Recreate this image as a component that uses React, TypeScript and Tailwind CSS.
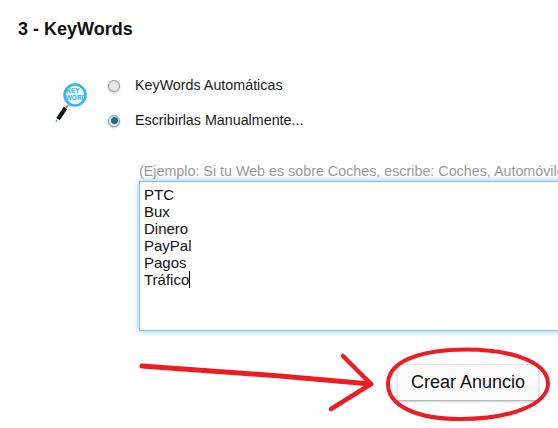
import React from "react";

const KeywordIcon = () => (
  <svg width="36" height="44" viewBox="0 0 36 44">
    <circle cx="21" cy="15" r="10.5" fill="#eaf8fe" stroke="#35b5e8" strokeWidth="2.5" />
    <text x="19" y="13" fontSize="6.5" fontWeight="700" fill="#35b5e8" textAnchor="middle" fontFamily="Liberation Sans">KEY</text>
    <text x="22" y="20" fontSize="6.5" fontWeight="700" fill="#35b5e8" textAnchor="middle" fontFamily="Liberation Sans">WORD</text>
    <line x1="14" y1="25" x2="12" y2="28" stroke="#8a8a8a" strokeWidth="2" />
    <line x1="11.5" y1="28" x2="4" y2="39" stroke="#111" strokeWidth="4" />
    <circle cx="2.5" cy="41" r="1" fill="#35b5e8" />
  </svg>
);

const Radio = ({ checked, label }: { checked?: boolean; label: string }) => (
  <label className="flex items-center gap-[15px] h-[17px]">
    <span className="w-[12px] h-[12px] rounded-full border border-[#9a9a9a] bg-[#e8e8e8] shadow-[0_1px_2px_rgba(0,0,0,0.25)] flex items-center justify-center">
      {checked && <span className="w-[7px] h-[7px] rounded-full bg-[#17699a]" />}
    </span>
    <span className="text-[14.3px] text-[#1a1a1a]">{label}</span>
  </label>
);

export default function App() {
  const keywords = ["PTC", "Bux", "Dinero", "PayPal", "Pagos"];
  return (
    <div className="relative w-[558px] h-[428px] overflow-hidden bg-white pt-[20px] font-['Liberation_Sans',Arial,sans-serif]">
      <h2 className="ml-[18px] text-[18px] leading-[18px] font-bold text-[#111]">3 - KeyWords</h2>

      <div className="flex mt-[39px] ml-[54px]">
        <div className="mt-[3px] w-[54px]">
          <KeywordIcon />
        </div>
        <div className="flex flex-col gap-[18px]">
          <Radio label="KeyWords Automáticas" />
          <Radio checked label="Escribirlas Manualmente..." />
        </div>
      </div>

      <div className="ml-[139px] mt-[34px] w-[460px]">
        <p className="text-[14.3px] leading-[16px] text-[#999] whitespace-nowrap overflow-hidden">
          (Ejemplo: Si tu Web es sobre Coches, escribe: Coches, Automóviles, Motor...)
        </p>
        <div className="mt-[2px] h-[150px] border border-[#7cc0f2] shadow-[0_0_6px_rgba(90,175,240,0.75)] px-[4px] pt-[4px] text-[15px] leading-[17px] text-[#111]">
          {keywords.map((word) => (
            <div key={word}>{word}</div>
          ))}
          <div className="flex">
            <span>Tráfico</span>
            <span className="w-px h-[17px] bg-black" />
          </div>
        </div>
      </div>

      <div className="flex justify-end mt-[33px] pr-[19px]">
        <button className="w-[142px] h-[37px] bg-[#fbfbfb] rounded-[2px] border border-[#e4e4e4] border-b-[#b8b8b8] shadow-[0_1px_2px_rgba(0,0,0,0.2)] text-[18px] text-[#111]">
          Crear Anuncio
        </button>
      </div>

      {/* hand drawn arrow and circle over the page */}
      <svg className="absolute top-0 left-0" width="558" height="428" fill="none" stroke="#ed1c24" strokeLinecap="round" strokeLinejoin="round">
        <path d="M142 366 L280 376 L371 384" strokeWidth="5" />
        <path d="M343 356 L371 384 L331 409" strokeWidth="4.5" />
        <path d="M450 350 C505 347 548 360 548 384 C547 405 510 419 460 419 C415 419 388 405 388 384 C388 365 410 353 450 350 Z" strokeWidth="4" />
      </svg>
    </div>
  );
}
